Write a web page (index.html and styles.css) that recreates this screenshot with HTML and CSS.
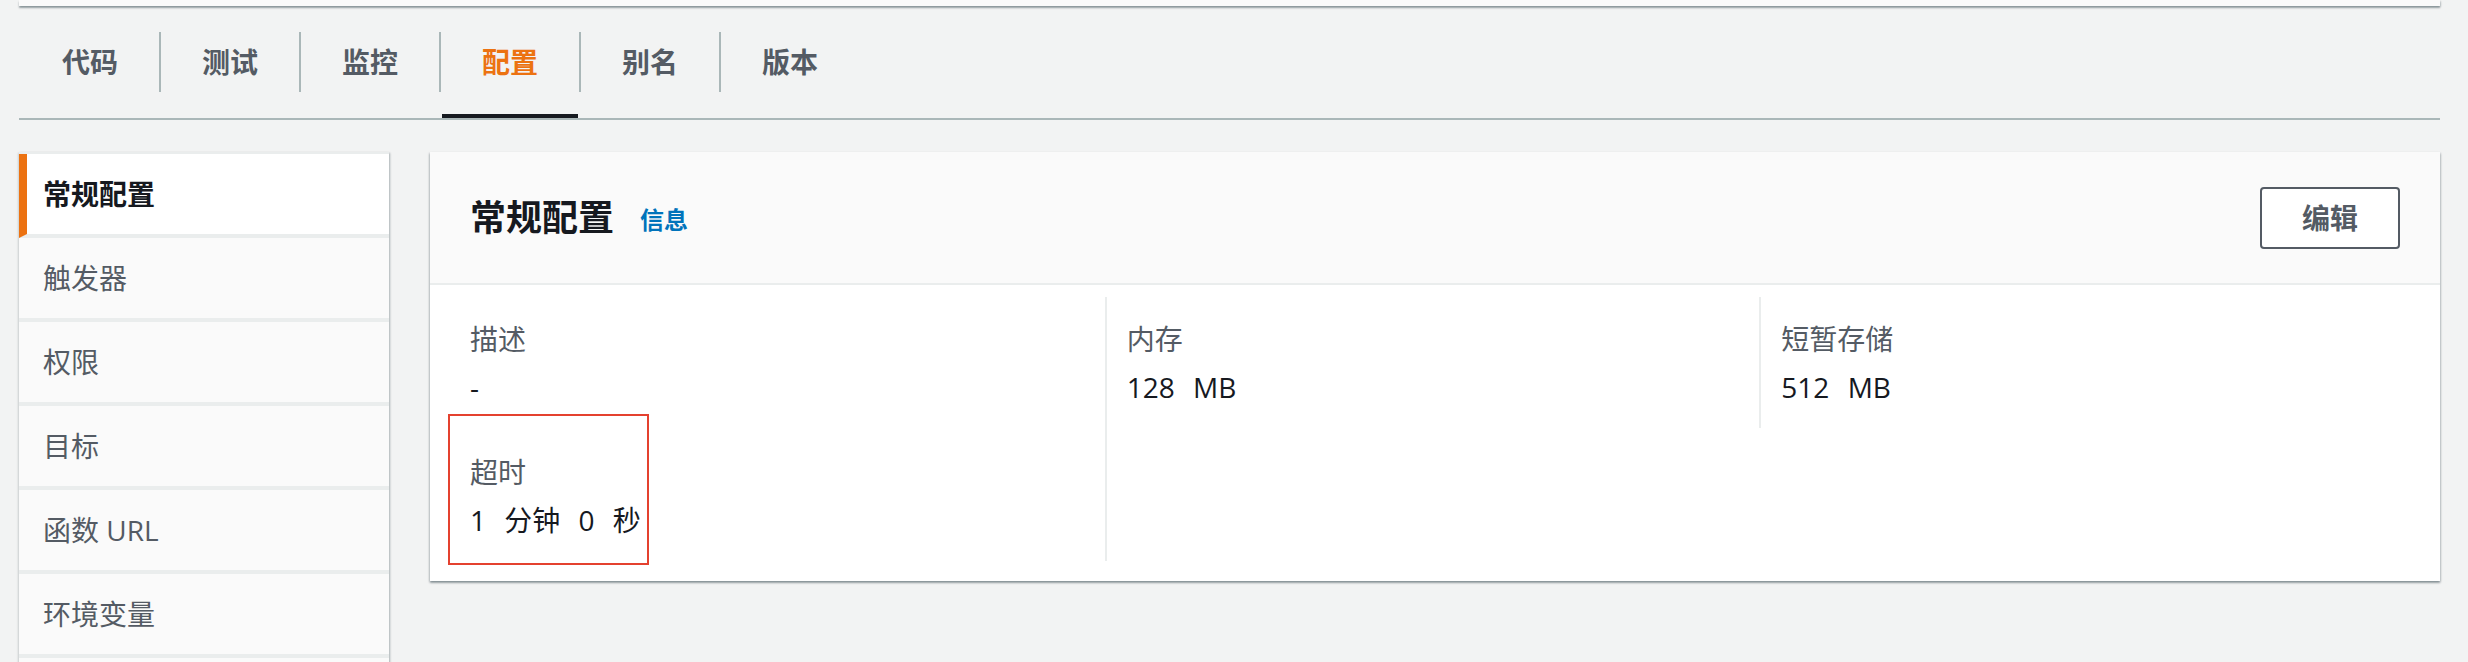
FILE: index.html
```html
<!DOCTYPE html>
<html lang="zh-CN">
<head>
<meta charset="utf-8">
<title>配置</title>
<link rel="stylesheet" href="styles.css">
</head>
<body>
<div class="page">
  <div class="topcard"></div>
  <div class="tabs">
    <div class="tab"><span class="tab-label">代码</span></div>
    <div class="tab"><span class="tab-label">测试</span></div>
    <div class="tab"><span class="tab-label">监控</span></div>
    <div class="tab active"><span class="tab-label">配置</span></div>
    <div class="tab"><span class="tab-label">别名</span></div>
    <div class="tab"><span class="tab-label">版本</span></div>
  </div>
  <div class="layout">
    <nav class="nav">
      <div class="nav-item active">常规配置</div>
      <div class="nav-item">触发器</div>
      <div class="nav-item">权限</div>
      <div class="nav-item">目标</div>
      <div class="nav-item">函数 URL</div>
      <div class="nav-item">环境变量</div>
      <div class="nav-item"></div>
    </nav>
    <section class="card">
      <div class="card-header">
        <div class="title-wrap">
          <h2 class="title">常规配置</h2>
          <span class="info">信息</span>
        </div>
        <button class="btn">编辑</button>
      </div>
      <div class="card-body">
        <div class="grid">
          <div class="item">
            <div class="label">描述</div>
            <div class="value">-</div>
          </div>
          <div class="item divided span2">
            <div class="label">内存</div>
            <div class="value">128 MB</div>
          </div>
          <div class="item divided">
            <div class="label">短暂存储</div>
            <div class="value">512 MB</div>
          </div>
          <div class="item marked">
            <div class="label">超时</div>
            <div class="value">1 分钟 0 秒</div>
            <div class="redbox"></div>
          </div>
        </div>
      </div>
    </section>
  </div>
</div>
</body>
</html>
```
FILE: styles.css
```css
html, body {
  margin: 0;
  padding: 0;
  background: #f2f3f3;
  font-family: "Open Sans", "Noto Sans CJK SC", sans-serif;
  color: #16191f;
  overflow: hidden;
}

.page {
  padding: 0 28px 0 19px;
  height: 662px;
  overflow: hidden;
}

.topcard {
  height: 6px;
  background: #fafafa;
  box-shadow: 0 2px 2px rgba(0, 28, 36, 0.35), 1px 1px 2px rgba(0, 28, 36, 0.15);
}

.tabs {
  display: flex;
  margin-top: 18px;
  border-bottom: 2px solid #aab7b8;
}

.tab {
  position: relative;
  padding: 8px 0 26px;
}

.tab-label {
  display: block;
  line-height: 60px;
  padding: 0 41px;
  border-left: 2px solid #aab7b8;
  font-size: 28px;
  font-weight: 700;
  color: #545b64;
  white-space: nowrap;
}

.tab:first-child .tab-label {
  border-left-color: transparent;
}

.tab.active .tab-label {
  color: #ec7211;
}

.tab.active::after {
  content: "";
  position: absolute;
  left: 3px;
  right: 1px;
  bottom: 0;
  height: 4px;
  background: #16191f;
}

.layout {
  display: flex;
  align-items: flex-start;
  gap: 41px;
  margin-top: 32px;
}

.nav {
  width: 370px;
  flex: none;
  display: flex;
  flex-direction: column;
  background: #eaeded;
  border-top: 2px solid #eaeded;
  box-shadow: 1px 1px 2px rgba(0, 28, 36, 0.3), -1px 1px 2px rgba(0, 28, 36, 0.15);
}

.nav-item {
  height: 80px;
  line-height: 80px;
  padding-left: 24px;
  font-size: 28px;
  color: #545b64;
  background: #fafafa;
  border-bottom: 4px solid #eaeded;
  white-space: nowrap;
}

.nav-item.active {
  background: #ffffff;
  border-left: 8px solid #ec7211;
  padding-left: 16px;
  color: #16191f;
  font-weight: 700;
}

.card {
  flex: 1;
  background: #ffffff;
  box-shadow: 0 2px 2px rgba(0, 28, 36, 0.3), 1px 1px 2px rgba(0, 28, 36, 0.15), -1px 1px 2px rgba(0, 28, 36, 0.15);
}

.card-header {
  height: 131px;
  display: flex;
  align-items: center;
  justify-content: space-between;
  padding: 0 40px;
  background: #fafafa;
  border-bottom: 2px solid #eaeded;
  box-sizing: content-box;
}

.title-wrap {
  display: flex;
  align-items: center;
  gap: 26px;
}

.title {
  margin: 0;
  font-size: 36px;
  font-weight: 700;
  color: #16191f;
  line-height: 48px;
}

.info {
  font-size: 24px;
  font-weight: 700;
  color: #0073bb;
  line-height: 48px;
  padding-top: 4px;
}

.btn {
  height: 62px;
  padding: 0 40px;
  border: 2px solid #545b64;
  border-radius: 4px;
  background: #ffffff;
  font-family: "Open Sans", "Noto Sans CJK SC", sans-serif;
  font-size: 28px;
  font-weight: 700;
  color: #545b64;
  line-height: 58px;
}

.card-body {
  padding: 12px 26px 20px 20px;
}

.grid {
  display: grid;
  grid-template-columns: 1fr 1fr 1fr;
  row-gap: 2px;
}

.item {
  position: relative;
  padding: 22px 20px 21px;
}

.item.divided {
  border-left: 2px solid #eaeded;
}

.item.span2 {
  grid-row: span 2;
}

.label {
  font-size: 28px;
  line-height: 40px;
  color: #545b64;
}

.value {
  margin-top: 8px;
  font-size: 28px;
  line-height: 40px;
  color: #16191f;
  word-spacing: 11px;
}

.redbox {
  position: absolute;
  left: -2px;
  top: -16px;
  width: 201px;
  height: 151px;
  box-sizing: border-box;
  border: 2px solid #e4412f;
}
```
